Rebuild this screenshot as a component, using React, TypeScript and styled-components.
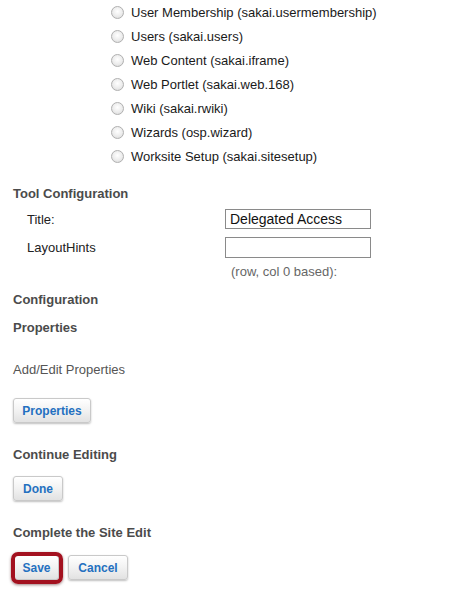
import React from "react";
import styled, { createGlobalStyle } from "styled-components";

const Global = createGlobalStyle`
  html, body { margin: 0; padding: 0; background: #ffffff; }
  body { font-family: "Liberation Sans", Arial, sans-serif; font-size: 13px; color: #222; }
`;

const Page = styled.div`
  width: 460px;
  height: 599px;
  overflow: hidden;
  display: flex;
  flex-direction: column;
  padding-left: 13px;
  box-sizing: border-box;
`;

const RadioList = styled.div`
  display: flex;
  flex-direction: column;
  padding-left: 98px;
`;

const RadioRow = styled.label`
  display: flex;
  align-items: center;
  height: 24px;
  gap: 7px;
  font-size: 13px;
  color: #1a1a1a;
`;

const Radio = styled.input.attrs({ type: "radio" })`
  appearance: none;
  margin: 0;
  width: 13px;
  height: 13px;
  border-radius: 50%;
  border: 1px solid #b0b0b0;
  background: radial-gradient(circle at 50% 40%, #ffffff 0%, #ececec 55%, #d4d4d4 100%);
  box-sizing: border-box;
  flex: none;
`;

const Heading = styled.div<{ $mt: number }>`
  margin-top: ${(p) => p.$mt}px;
  line-height: 20px;
  font-weight: bold;
  font-size: 13px;
  color: #4b4b4b;
`;

const FormGrid = styled.div`
  margin-top: 1px;
  display: grid;
  grid-template-columns: 198px 146px;
  grid-auto-rows: 28px;
  padding-left: 14px;
  align-items: center;
`;

const FieldLabel = styled.div`
  font-size: 13px;
  color: #222;
`;

const TextInput = styled.input<{ $h: number }>`
  box-sizing: border-box;
  width: 146px;
  height: ${(p) => p.$h}px;
  border: 1px solid #8a8a8a;
  padding: 0 4px;
  font-family: "Liberation Sans", Arial, sans-serif;
  font-size: 14px;
  color: #111;
  background: #fff;
  outline: none;
`;

const Hint = styled.div`
  line-height: 22px;
  padding-left: 218px;
  font-size: 13px;
  color: #666;
`;

const Plain = styled.div<{ $mt: number }>`
  margin-top: ${(p) => p.$mt}px;
  line-height: 20px;
  font-size: 13px;
  color: #555;
`;

const ButtonRow = styled.div<{ $mt: number }>`
  margin-top: ${(p) => p.$mt}px;
  display: flex;
  gap: 9px;
`;

const Button = styled.button<{ $w: number; $highlight?: boolean }>`
  position: relative;
  width: ${(p) => p.$w}px;
  height: 25px;
  padding: 0;
  border: 1px solid #c9c9c9;
  border-radius: 3px;
  background: linear-gradient(#ffffff, #f2f2f2 50%, #e2e2e2);
  box-shadow: 0 1px 2px rgba(0, 0, 0, 0.25);
  font-family: "Liberation Sans", Arial, sans-serif;
  font-weight: bold;
  font-size: 12px;
  color: #2470c0;
  margin-left: ${(p) => (p.$highlight ? 1 : 0)}px;
  &::after {
    content: "";
    display: ${(p) => (p.$highlight ? "block" : "none")};
    position: absolute;
    top: -4px;
    bottom: -5px;
    left: -4px;
    right: -5px;
    border: 4px solid #a3111f;
    border-radius: 7px;
    box-shadow: 0 1px 3px rgba(60, 0, 0, 0.5);
  }
`;

const tools = [
  "User Membership (sakai.usermembership)",
  "Users (sakai.users)",
  "Web Content (sakai.iframe)",
  "Web Portlet (sakai.web.168)",
  "Wiki (sakai.rwiki)",
  "Wizards (osp.wizard)",
  "Worksite Setup (sakai.sitesetup)",
];

export default function App() {
  return (
    <>
      <Global />
      <Page>
        <RadioList>
          {tools.map((t) => (
            <RadioRow key={t}>
              <Radio name="tool" />
              {t}
            </RadioRow>
          ))}
        </RadioList>
        <Heading $mt={16}>Tool Configuration</Heading>
        <FormGrid>
          <FieldLabel>Title:</FieldLabel>
          <TextInput $h={20} defaultValue="Delegated Access" />
          <FieldLabel>LayoutHints</FieldLabel>
          <TextInput $h={21} defaultValue="" />
        </FormGrid>
        <Hint>(row, col 0 based):</Hint>
        <Heading $mt={7}>Configuration</Heading>
        <Heading $mt={8}>Properties</Heading>
        <Plain $mt={22}>Add/Edit Properties</Plain>
        <ButtonRow $mt={18}>
          <Button $w={78}>Properties</Button>
        </ButtonRow>
        <Heading $mt={22}>Continue Editing</Heading>
        <ButtonRow $mt={11}>
          <Button $w={50}>Done</Button>
        </ButtonRow>
        <Heading $mt={22}>Complete the Site Edit</Heading>
        <ButtonRow $mt={12}>
          <Button $w={45} $highlight>
            Save
          </Button>
          <Button $w={60}>Cancel</Button>
        </ButtonRow>
      </Page>
    </>
  );
}
